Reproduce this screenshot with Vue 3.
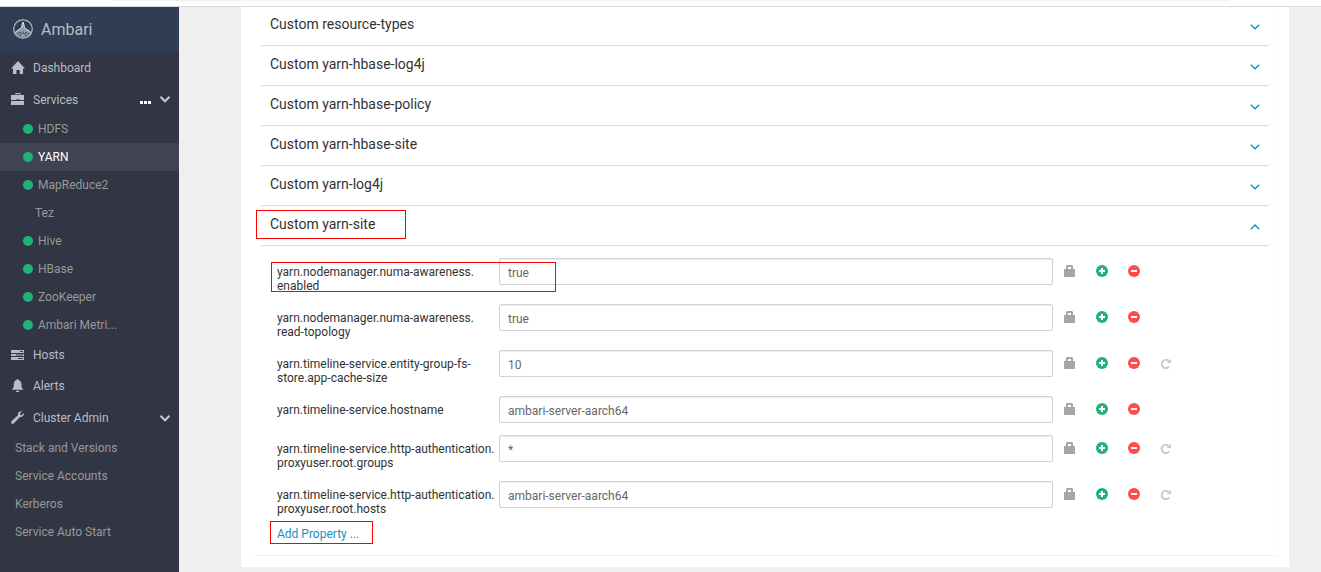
<script setup>
import { ref } from 'vue'

const services = [
  { name: 'HDFS', live: true },
  { name: 'YARN', live: true, active: true },
  { name: 'MapReduce2', live: true },
  { name: 'Tez', live: false },
  { name: 'Hive', live: true },
  { name: 'HBase', live: true },
  { name: 'ZooKeeper', live: true },
  { name: 'Ambari Metri...', live: true },
]

const adminLinks = ['Stack and Versions', 'Service Accounts', 'Kerberos', 'Service Auto Start']

const sections = [
  { title: 'Custom resource-types' },
  { title: 'Custom yarn-hbase-log4j' },
  { title: 'Custom yarn-hbase-policy' },
  { title: 'Custom yarn-hbase-site' },
  { title: 'Custom yarn-log4j' },
  { title: 'Custom yarn-site', open: true, marked: true },
]

const properties = ref([
  { id: 'p1', lines: ['yarn.nodemanager.numa-awareness.', 'enabled'], value: 'true', marked: true },
  { id: 'p2', lines: ['yarn.nodemanager.numa-awareness.', 'read-topology'], value: 'true' },
  { id: 'p3', lines: ['yarn.timeline-service.entity-group-fs-', 'store.app-cache-size'], value: '10', undo: true },
  { id: 'p4', lines: ['yarn.timeline-service.hostname'], value: 'ambari-server-aarch64' },
  { id: 'p5', lines: ['yarn.timeline-service.http-authentication.', 'proxyuser.root.groups'], value: '*', undo: true },
  { id: 'p6', lines: ['yarn.timeline-service.http-authentication.', 'proxyuser.root.hosts'], value: 'ambari-server-aarch64', undo: true },
])
</script>

<template>
  <div class="page">
    <div class="topbar"><div class="address"></div></div>
    <div class="layout">
      <aside class="sidebar">
        <a class="brand" href="#">
          <svg class="logo" viewBox="0 0 20 20" aria-hidden="true">
            <circle cx="10" cy="10" r="9.3" fill="none" stroke="#c3c9d1" stroke-width="1.1" />
            <path d="M10 3 L11 6 L11.4 8.6 L14 10.5 L18.6 13.5 L16.5 16 L14 17.8 L10 19 L6 17.8 L3.5 16 L1.4 13.5 L6 10.5 L8.6 8.6 L9 6 Z" fill="#8f9aab" />
            <path d="M10 3 L11 6 L11.4 8.6 L14 10.5 L17.5 13 M10 3 L9 6 L8.6 8.6 L6 10.5 L2.5 13" stroke="#dfe3e8" fill="none" />
            <path d="M4 15 L6.5 13.5 M7.5 13 L8 15.5 M10 12.5 V15 M12.5 13 L12 15.5 M13.7 13.5 L16 15 M6 16.8 L8 16 M12 16.3 L14 16.8" stroke="#3a465c" fill="none" />
          </svg>
          <span>Ambari</span>
        </a>
        <nav>
          <a class="item" href="#">
            <svg class="icon" viewBox="0 0 14 14" aria-hidden="true"><path d="M7 0 L14 7.5 H12 V13 H8.7 V9 H5.4 V13 H2 V7.5 H0 Z" fill="#b8bec4" /></svg>
            <span>Dashboard</span>
          </a>
          <a class="item compact" href="#">
            <svg class="icon" viewBox="0 0 14 14" aria-hidden="true"><path d="M4.5 2 V0 H9.5 V2 H13 V7 H8.5 V6.3 H5.5 V7 H0 V2 Z M5.5 1 V2 H8.5 V1 Z M0 8 H13 V12 H0 Z" fill="#b8bec4" fill-rule="evenodd" /></svg>
            <span class="grow">Services</span>
            <svg class="dots" viewBox="0 0 11 9" aria-hidden="true"><path d="M0 6 h3 v3 h-3z M4 6 h3 v3 h-3z M8 6 h3 v3 h-3z" fill="#fff" /></svg>
            <svg class="arrow" viewBox="0 0 10 7" aria-hidden="true"><path d="M0.5 0.8 L5 5.3 L9.5 0.8" fill="none" stroke="#c3c8ce" stroke-width="2" /></svg>
          </a>
          <a v-for="s in services" :key="s.name" href="#" class="sub" :class="{ active: s.active, idle: !s.live }">
            <i v-if="s.live" class="dot"></i>
            <span>{{ s.name }}</span>
          </a>
          <a class="item compact" href="#">
            <svg class="icon" viewBox="0 0 14 14" aria-hidden="true"><path d="M0 2 H13 V5 H0 Z M0 6 H13 V8 H0 Z M0 9 H13 V12 H0 Z" fill="#b8bec4" /><path d="M9 3.5 H12 M5 7 H12 M7 10.5 H12" stroke="#323544" /></svg>
            <span>Hosts</span>
          </a>
          <a class="item" href="#">
            <svg class="icon" viewBox="0 0 14 14" aria-hidden="true"><path d="M6 0 H7 L7.5 1 L9.5 2 L10.5 5 V8 L12.3 10.8 H0.9 L2.7 8 V5 L3.7 2 L5.5 1 Z M5 11.8 H8.2 V13 H5 Z" fill="#b8bec4" /></svg>
            <span>Alerts</span>
          </a>
          <a class="item" href="#">
            <svg class="icon" viewBox="0 0 14 14" aria-hidden="true"><path d="M12.9 2 L10.8 4.2 L9.3 3.8 L9 2.4 L11 0.3 C8.8 -0.3 6.6 1.5 7.1 4 L0.5 10.3 C-0.8 11.8 1.2 13.8 2.7 12.5 L9 6.1 C11.5 6.6 13.5 4.3 12.9 2 Z" fill="#b8bec4" /></svg>
            <span class="grow">Cluster Admin</span>
            <svg class="arrow" viewBox="0 0 10 7" aria-hidden="true"><path d="M0.5 0.8 L5 5.3 L9.5 0.8" fill="none" stroke="#c3c8ce" stroke-width="2" /></svg>
          </a>
          <a v-for="l in adminLinks" :key="l" href="#" class="sub admin">{{ l }}</a>
        </nav>
      </aside>

      <main class="content">
        <div class="card">
          <div class="panel">
            <section v-for="s in sections" :key="s.title" class="section">
              <button type="button" class="heading" :aria-expanded="!!s.open">
                <span>{{ s.title }}</span>
                <svg class="chevron" viewBox="0 0 10 6" aria-hidden="true">
                  <path :d="s.open ? 'M0.8 5.2 L5 1 L9.2 5.2' : 'M0.8 0.8 L5 4.8 L9.2 0.8'" fill="none" stroke="#1491c1" stroke-width="1.4" />
                </svg>
              </button>
              <div v-if="s.marked" class="mark mark-section"></div>
            </section>

            <form class="properties" @submit.prevent>
              <div v-for="p in properties" :key="p.id" class="row">
                <label :for="p.id"><span v-for="t in p.lines" :key="t">{{ t }}</span></label>
                <input :id="p.id" v-model="p.value" type="text" />
                <div class="actions">
                  <button type="button" aria-label="Final">
                    <svg viewBox="0 0 12 12"><path d="M0 4 H2 V1 L3 0 H8 L9 1 V4 H11 V12 H0 Z M4 4 H7 V2 H4 Z" fill="#a6a6a6" fill-rule="evenodd" /></svg>
                  </button>
                  <button type="button" aria-label="Add override">
                    <svg viewBox="0 0 12 12"><circle cx="6" cy="6" r="6" fill="#1eb475" /><path d="M6 3 V9 M3 6 H9" stroke="#fff" stroke-width="2" /></svg>
                  </button>
                  <button type="button" aria-label="Remove">
                    <svg viewBox="0 0 12 12"><circle cx="6" cy="6" r="6" fill="#ff4b4b" /><path d="M3 6 H9" stroke="#fff" stroke-width="2" /></svg>
                  </button>
                  <button v-if="p.undo" type="button" aria-label="Set recommended">
                    <svg viewBox="0 0 12 12"><path d="M9.2 9.6 A4.2 4.2 0 1 1 8.6 3.8" fill="none" stroke="#c8c8c8" stroke-width="1.8" /><path d="M11 2 V6 H6.5 Z" fill="#c8c8c8" /></svg>
                  </button>
                </div>
                <div v-if="p.marked" class="mark mark-row"></div>
              </div>
              <div class="add">
                <a href="#">Add Property ...</a>
                <div class="mark mark-add"></div>
              </div>
            </form>
          </div>
        </div>
      </main>
    </div>
  </div>
</template>

<style>
body {
  background: #efefef;
}
</style>

<style scoped>
.page {
  display: flex;
  flex-direction: column;
  min-height: 100vh;
  font-family: Roboto, "Liberation Sans", sans-serif;
  font-size: 12px;
  color: #333;
}
.page * {
  box-sizing: border-box;
}
a {
  text-decoration: none;
}
.topbar {
  height: 7px;
  background: #fff;
  border-bottom: 1px solid #d9d9dc;
}
.address {
  height: 1px;
  margin: 0 94px 0 113px;
  background: #eff1f2;
}
.layout {
  display: flex;
  flex: 1;
}
.sidebar {
  flex: 0 0 179px;
  background: #323544;
}
.brand {
  display: flex;
  align-items: center;
  gap: 8px;
  height: 44px;
  padding-left: 13px;
  background: #313d54;
  color: #b8bec4;
  font-size: 16px;
}
.logo {
  width: 20px;
  height: 20px;
}
nav {
  padding-top: 1px;
}
.item {
  display: flex;
  align-items: center;
  height: 32px;
  padding: 0 9px 0 11px;
  color: #b8bec4;
}
.compact {
  height: 31px;
}
.icon {
  width: 14px;
  height: 14px;
  margin-right: 8px;
}
.grow {
  flex: 1;
}
.dots {
  width: 11px;
  height: 9px;
  margin-right: 9px;
}
.arrow {
  width: 10px;
  height: 7px;
}
.sub {
  display: flex;
  align-items: center;
  gap: 5px;
  height: 28px;
  padding-left: 23px;
  color: #999;
}
.active {
  background: #404351;
  color: #fff;
}
.idle {
  padding-left: 35px;
}
.admin {
  padding-left: 15px;
}
.dot {
  width: 10px;
  height: 10px;
  border-radius: 50%;
  background: #1eb475;
}
.content {
  flex: 1;
  padding: 0 32px 5px 62px;
  background: #efefef;
}
.card {
  padding: 0 12px 11px;
  background: #fff;
}
.panel {
  padding: 0 7px 12px 8px;
  border-bottom: 1px solid #f2f2f2;
  border-right: 1px solid #fcfcfc;
}
.section {
  position: relative;
  border-bottom: 1px solid #ddd;
}
.heading {
  display: flex;
  align-items: center;
  justify-content: space-between;
  width: 100%;
  height: 39px;
  padding: 0 9px 4px;
  border: 0;
  background: none;
  color: #333;
  font: 14px/20px Roboto, "Liberation Sans", sans-serif;
}
.section:first-child .heading {
  height: 38px;
}
.chevron {
  width: 10px;
  height: 6px;
  margin-top: 6px;
}
.properties {
  padding: 12px 0 0 16px;
}
.row {
  position: relative;
  display: grid;
  grid-template-columns: 222px 1fr 216px;
  align-items: start;
  min-height: 39px;
  padding-bottom: 11px;
}
.row:nth-last-child(2) {
  padding-bottom: 9px;
}
label {
  padding-top: 7px;
  line-height: 14px;
  white-space: nowrap;
}
label span {
  display: block;
}
input {
  width: 100%;
  height: 27px;
  padding: 2px 8px 0;
  border: 1px solid #cfd3d7;
  border-radius: 2px;
  background: #fff;
  box-shadow: inset 0 1px 1px #eee;
  color: #666;
  font: 12px Roboto, "Liberation Sans", sans-serif;
}
.actions {
  display: flex;
  gap: 20px;
  padding: 7px 0 0 11px;
}
.actions button {
  width: 12px;
  height: 12px;
  padding: 0;
  border: 0;
  background: none;
}
.actions svg {
  display: block;
  width: 12px;
  height: 12px;
}
.add {
  position: relative;
  line-height: 18px;
}
.add a {
  color: #1491c1;
}
.mark {
  position: absolute;
  border: 1px solid #f00;
  pointer-events: none;
}
.mark-section {
  top: 4px;
  left: -5px;
  width: 150px;
  height: 29px;
}
.mark-row {
  top: 4px;
  left: -6px;
  width: 285px;
  height: 30px;
}
.mark-add {
  top: -4px;
  left: -7px;
  width: 103px;
  height: 23px;
}
</style>
